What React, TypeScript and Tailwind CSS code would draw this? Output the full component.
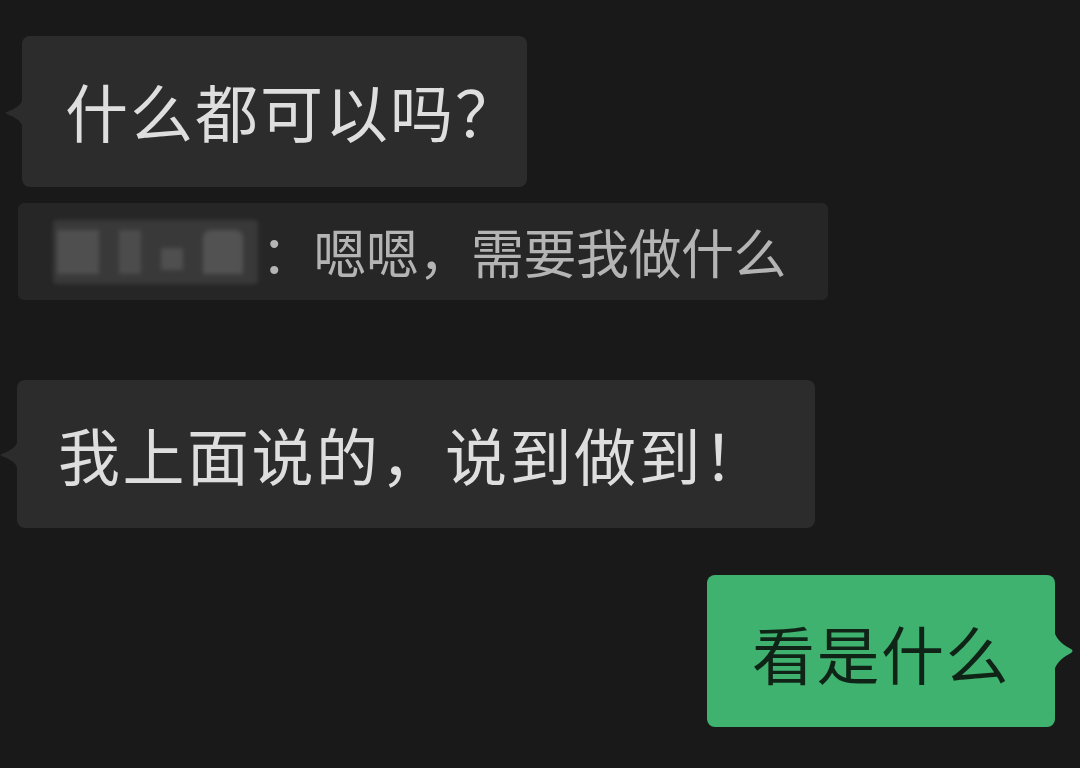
import React from 'react'

const font = { fontFamily: '"Noto Sans CJK SC", "Noto Sans", sans-serif' }

function LeftTail({ top }: { top: string }) {
  return (
    <svg
      className={`absolute -left-[18px] ${top}`}
      width="19"
      height="30"
      viewBox="0 0 19 30"
    >
      <path d="M19 0 C17 8 10 11 3 14 Q0 15 3 16 C10 19 17 22 19 30 Z" fill="#2c2c2c" />
    </svg>
  )
}

function RightTail() {
  return (
    <svg className="absolute -right-[19px] top-[56px]" width="20" height="40" viewBox="0 0 20 40">
      <path d="M0 0 C3 10 10 14 17 18 Q20 20 17 22 C10 26 3 30 0 40 Z" fill="#3fb270" />
    </svg>
  )
}

export default function App() {
  return (
    <div className="w-[1080px] h-[768px] bg-[#191919] overflow-hidden flex flex-col" style={font}>
      {/* incoming */}
      <div className="relative ml-[22px] mt-[36px] w-[505px] h-[151px] rounded-lg bg-[#2c2c2c] flex items-center pl-[43px]">
        <LeftTail top="top-[62px]" />
        <span className="text-[63px] leading-none text-[#dedede] tracking-[2px] -mt-[4px]">什么都可以吗？</span>
      </div>

      {/* quoted reply */}
      <div className="ml-[18px] mt-[16px] w-[810px] h-[97px] rounded-md bg-[#262626] flex items-center pl-[35px]">
        <div className="flex items-center gap-[20px] w-[205px] h-[64px] bg-[#393939] rounded blur-[2px] px-[4px]">
          <div className="w-[42px] h-[44px] bg-[#4f4f4f]" />
          <div className="w-[22px] h-[44px] bg-[#4c4c4c]" />
          <div className="w-[22px] h-[22px] mt-[14px] bg-[#4f4f4f]" />
          <div className="w-[40px] h-[44px] bg-[#525252] rounded-t-lg" />
        </div>
        <span className="text-[53px] leading-none text-[#b4b4b4] tracking-[-0.5px] ml-[3px]">：嗯嗯，需要我做什么</span>
      </div>

      {/* incoming */}
      <div className="relative ml-[17px] mt-[80px] w-[798px] h-[148px] rounded-lg bg-[#2c2c2c] flex items-center pl-[41px]">
        <LeftTail top="top-[60px]" />
        <span className="text-[62px] leading-none text-[#dedede] tracking-[2.5px]">我上面说的，说到做到！</span>
      </div>

      {/* outgoing */}
      <div className="relative self-end mr-[25px] mt-[47px] w-[348px] h-[152px] rounded-lg bg-[#3fb270] flex items-center pl-[45px]">
        <RightTail />
        <span className="text-[63px] leading-none text-[#0f2416] tracking-[1.5px]">看是什么</span>
      </div>
    </div>
  )
}
